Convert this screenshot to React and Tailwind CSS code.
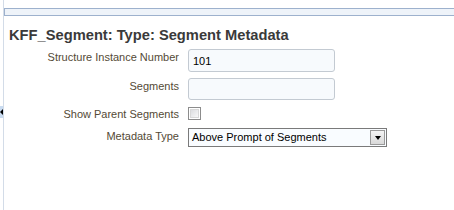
import { useState } from "react";

const font = { fontFamily: '"Liberation Sans", Arial, sans-serif' };

function Row({ label, children }) {
  return (
    <div className="flex items-start">
      <div className="w-[175px] shrink-0 text-right text-[11px] leading-4 text-[#544a36]">{label}</div>
      <div className="ml-[9px] flex">{children}</div>
    </div>
  );
}

export default function App() {
  const [num, setNum] = useState("101");
  const [seg, setSeg] = useState("");
  const [showParent, setShowParent] = useState(false);

  return (
    <div className="relative flex w-[454px] h-[210px] bg-white overflow-hidden" style={font}>
      <div className="w-[3px] bg-white"></div>
      <div className="w-px bg-[#d3dce8]"></div>

      {/* splitter handle */}
      <div className="absolute left-0 top-[106px] w-[3px] h-[12px] bg-[#c9dbf0]">
        <div className="absolute left-0 top-[3px] w-0 h-0 border-y-[3px] border-y-transparent border-r-[3px] border-r-black"></div>
      </div>

      <div className="flex-1 flex flex-col pt-[8px]">
        <div className="h-[8px] border border-r-0 border-[#9db1cd] bg-[#eef3f9]"></div>

        <h1 className="mt-[10px] ml-[5px] text-[14.7px] leading-[18px] font-bold text-[#3a3a3a]">
          KFF_Segment: Type: Segment Metadata
        </h1>

        <div className="mt-[5px] flex flex-col">
          <Row label="Structure Instance Number">
            <input
              value={num}
              onChange={(e) => setNum(e.target.value)}
              className="block w-[147px] h-[23px] px-[4px] border border-[#c3cad2] rounded-[3px] bg-[#f7fafd] text-[11px] text-black outline-none"
            />
          </Row>
          <div className="h-[6px]"></div>
          <Row label="Segments">
            <input
              value={seg}
              onChange={(e) => setSeg(e.target.value)}
              className="block w-[147px] h-[22px] px-[4px] border border-[#c3cad2] rounded-[3px] bg-[#f7fafd] text-[11px] text-black outline-none"
            />
          </Row>
          <div className="h-[6px]"></div>
          <Row label="Show Parent Segments">
            <button
              onClick={() => setShowParent(!showParent)}
              className="mt-px w-[13px] h-[13px] border border-[#8c8c8c] bg-white p-px flex"
            >
              <span className="flex-1 border border-[#d8d8d8] bg-gradient-to-br from-[#dcdde0] to-[#f8f8f8] flex items-center justify-center text-[9px] leading-none">
                {showParent ? "✓" : ""}
              </span>
            </button>
          </Row>
          <div className="h-[6px]"></div>
          <Row label="Metadata Type">
            <div className="flex w-[199px] h-[19px] border border-[#7a7a7a] bg-[#f9fcff]">
              <div className="flex-1 px-[3px] text-[11px] leading-[17px] text-black">Above Prompt of Segments</div>
              <div className="w-[15px] m-px border border-[#9a9a9a] bg-gradient-to-b from-[#f4f4f4] to-[#d9d9d9] flex items-center justify-center">
                <div className="w-0 h-0 border-x-[3px] border-x-transparent border-t-[4px] border-t-black"></div>
              </div>
            </div>
          </Row>
        </div>
      </div>
    </div>
  );
}
